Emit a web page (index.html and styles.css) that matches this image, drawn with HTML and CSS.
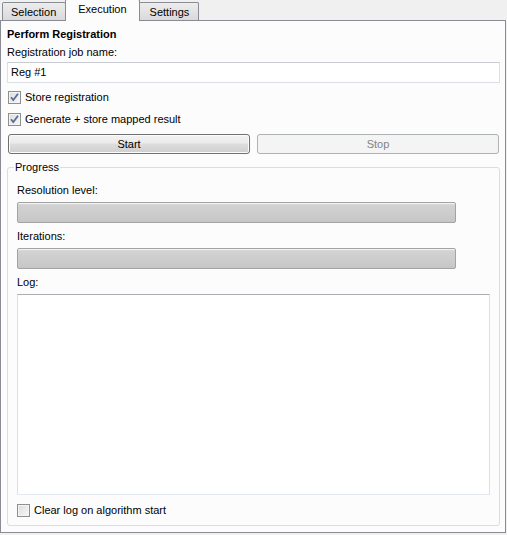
FILE: index.html
```html
<!DOCTYPE html>
<html>
<head>
<meta charset="utf-8">
<link rel="stylesheet" href="styles.css">
</head>
<body>
<div class="window">
  <div class="tabbar">
    <div class="tab tab-first">Selection</div>
    <div class="tab active">Execution</div>
    <div class="tab tab-last">Settings</div>
  </div>
  <div class="pane">
    <div class="title">Perform Registration</div>
    <div class="label">Registration job name:</div>
    <div class="input">Reg #1</div>
    <div class="check check-first">
      <span class="box"><svg width="11" height="11" viewBox="0 0 11 11"><path d="M2 5.2 L4.3 8 L9 1.8" fill="none" stroke="#5a6d99" stroke-width="1.8"/></svg></span>
      <span>Store registration</span>
    </div>
    <div class="check">
      <span class="box"><svg width="11" height="11" viewBox="0 0 11 11"><path d="M2 5.2 L4.3 8 L9 1.8" fill="none" stroke="#5a6d99" stroke-width="1.8"/></svg></span>
      <span>Generate + store mapped result</span>
    </div>
    <div class="buttons">
      <div class="btn">Start</div>
      <div class="btn disabled">Stop</div>
    </div>
    <fieldset class="group">
      <legend>Progress</legend>
      <div class="label label-first">Resolution level:</div>
      <div class="progress"></div>
      <div class="label label-gap">Iterations:</div>
      <div class="progress"></div>
      <div class="label label-gap">Log:</div>
      <div class="log"></div>
      <div class="check check-group">
        <span class="box"></span>
        <span>Clear log on algorithm start</span>
      </div>
    </fieldset>
  </div>
</div>
</body>
</html>
```
FILE: styles.css
```css
html, body {
  margin: 0;
  padding: 0;
  background: #f0f0f0;
}
body {
  font-family: "Liberation Sans", Arial, sans-serif;
  font-size: 11px;
  color: #000;
  width: 507px;
  height: 535px;
  overflow: hidden;
}
.window {
  display: flex;
  flex-direction: column;
  width: 506px;
  height: 533px;
}
.tabbar {
  display: flex;
  align-items: flex-end;
  height: 20px;
  padding-left: 2px;
  position: relative;
  z-index: 1;
}
.tab {
  height: 17px;
  line-height: 18px;
  padding: 0 10px;
  border: 1px solid #898c95;
  border-bottom: none;
  border-radius: 2px 2px 0 0;
  background: linear-gradient(#ededed, #d9d9d9);
  margin-left: -1px;
}
.tab-first {
  margin-left: 0;
  padding: 0 9px 0 8px;
}
.tab-last {
  padding: 0 9px 0 10px;
}
.tab.active {
  height: 21px;
  line-height: 19px;
  margin-bottom: -1px;
  background: #fcfcfc;
  padding: 0 12px;
  border-radius: 2px 2px 0 0;
}
.pane {
  flex: 1;
  display: flex;
  flex-direction: column;
  border: 1px solid #898c95;
  background: #fcfcfc;
  padding: 7px 5px 6px 6px;
  min-height: 0;
}
.title {
  font-weight: bold;
  line-height: 13px;
  height: 13px;
}
.label {
  line-height: 13px;
  height: 13px;
  margin-top: 5px;
}
.input {
  margin-top: 3px;
  height: 19px;
  line-height: 19px;
  border: 1px solid #dcdfe5;
  border-top-color: #c9ccd2;
  background: #fff;
  padding-left: 3px;
}
.check {
  display: flex;
  align-items: center;
  height: 22px;
  gap: 4px;
  padding-left: 1px;
}
.check-first {
  margin-top: 3px;
}
.box {
  width: 11px;
  height: 11px;
  border: 1px solid #8e8f8f;
  background: linear-gradient(135deg, #dcdcdc, #f8f8f8);
  box-shadow: inset 0 0 0 1px #f4f4f4;
  display: flex;
  align-items: center;
  justify-content: center;
}
.box svg {
  display: block;
}
.buttons {
  margin-top: 4px;
  display: flex;
  gap: 7px;
  padding: 0 1px;
}
.btn {
  flex: 1;
  height: 18px;
  line-height: 18px;
  text-align: center;
  border: 1px solid #707070;
  border-radius: 3px;
  background: linear-gradient(#f2f2f2 0%, #ebebeb 45%, #dddddd 50%, #cfcfcf 100%);
  box-shadow: inset 0 0 0 1px #fcfcfc;
}
.btn.disabled {
  border-color: #adb2b5;
  background: #f4f4f4;
  color: #838383;
  box-shadow: none;
}
.group {
  flex: 1;
  margin: 7px 0 0 0;
  border: 1px solid #d5dfe5;
  border-radius: 3px;
  padding: 10px 9px 4px 9px;
  display: flex;
  flex-direction: column;
  min-height: 0;
  min-width: 0;
}
.group legend {
  padding: 0 1px;
  margin-left: -3px;
  line-height: 13px;
}
.label-first {
  margin-top: 0;
}
.label-gap {
  margin-top: 7px;
}
.progress {
  margin-top: 5px;
  width: 437px;
  height: 19px;
  border: 1px solid #a3a3a3;
  border-radius: 2px;
  background: linear-gradient(#e6e6e6 0px, #d2d2d2 2px, #cccccc 60%, #c6c6c6 100%);
  box-shadow: inset 0 1px 0 #f2f2f2;
}
.log {
  flex: 1;
  margin-top: 5px;
  border: 1px solid #dbdfe6;
  border-top-color: #abadb3;
  border-bottom-color: #e3e9ef;
  background: #fff;
}
.check-group {
  margin-top: 4px;
  padding-left: 0;
}
```
